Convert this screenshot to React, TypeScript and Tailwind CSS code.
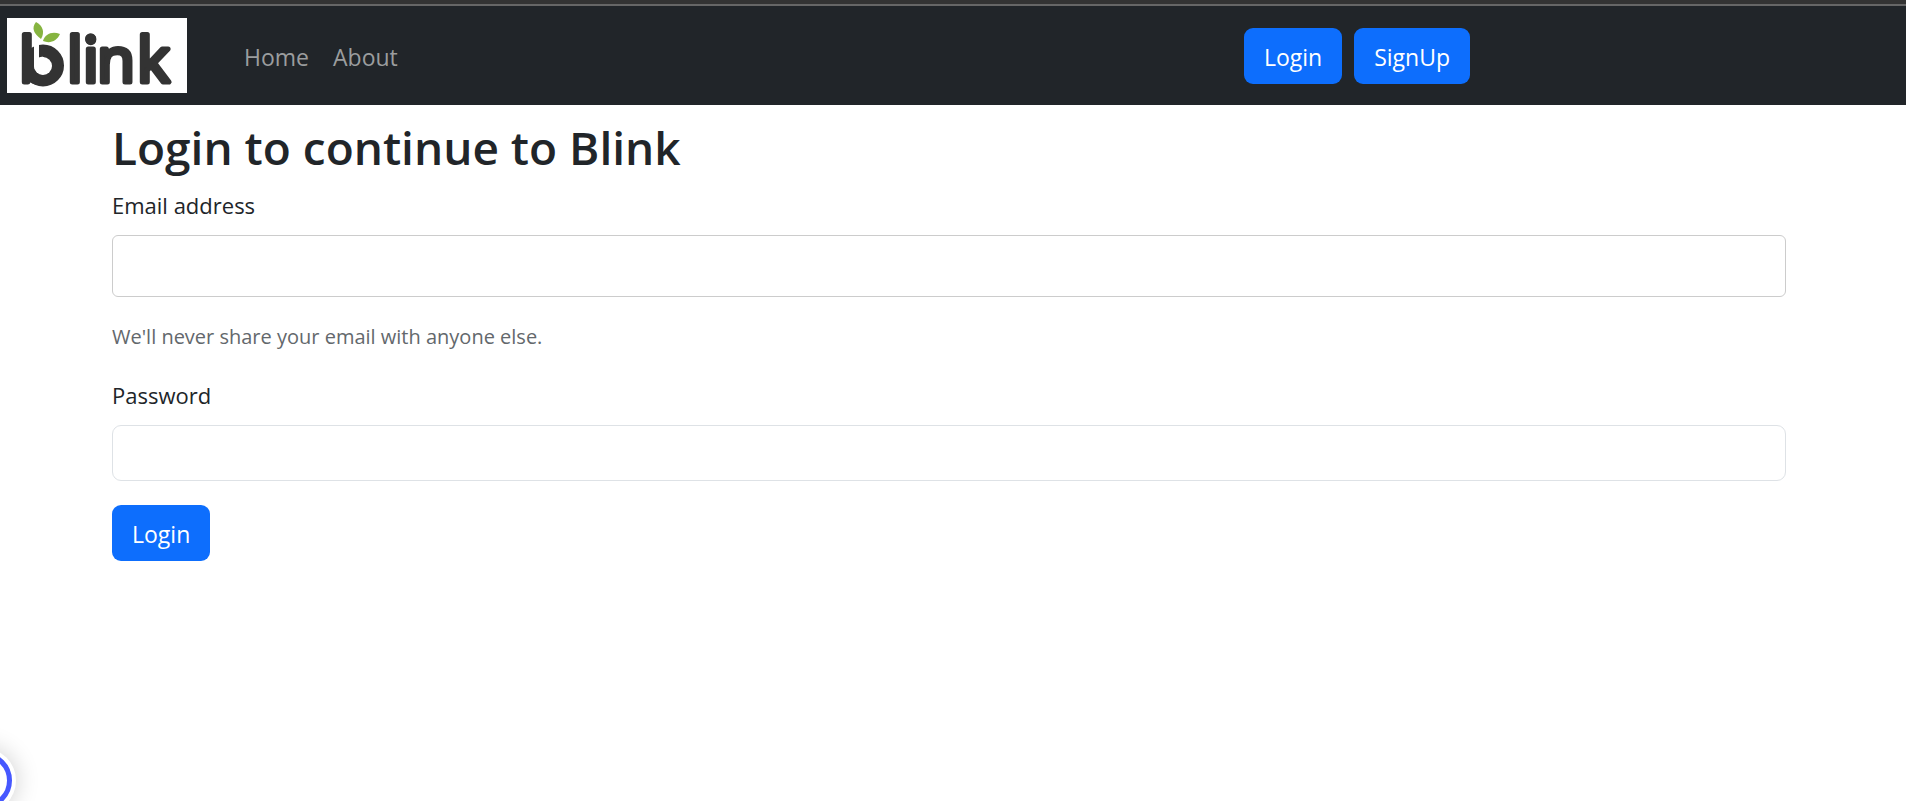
import { useState } from "react";

function BlinkLogo() {
  return (
    <svg viewBox="0 0 180 75" className="h-[75px] w-[180px] overflow-visible bg-white" role="img" aria-label="blink">
      <g
        fill="#333333"
        stroke="#333333"
        strokeWidth="5"
        strokeLinejoin="round"
        fontFamily="'Open Sans', sans-serif"
        fontSize="62"
      >
        <text x="12" y="64">b</text>
        <text x="60" y="64">l</text>
        <text x="76" y="64">i</text>
        <text x="90" y="64">n</text>
        <text x="130" y="64">k</text>
      </g>
      <circle cx="83.500" cy="21" r="5.500" fill="#333333" />
      {/* round bowl of the mark, opened by a slot beside the stem */}
      <circle cx="36" cy="47.500" r="15" fill="none" stroke="#333333" strokeWidth="12" />
      <circle cx="36" cy="48" r="9" fill="#ffffff" />
      <path d="M27 10H32V48H27Z" fill="#ffffff" />
      <path d="M34 21C27 16 24 10 29 4C36 8 38 14 34 21Z" fill="#86b440" />
      <path d="M36 23C38 16 45 13 53 16C50 23 43 26 36 23Z" fill="#86b440" />
    </svg>
  );
}

const button =
  "h-14 cursor-pointer rounded-[9px] bg-[#0d6efd] px-5 pt-0.5 text-[23px] leading-9 text-white hover:bg-[#0b5ed7]";

export default function App() {
  const [email, setEmail] = useState("");
  const [password, setPassword] = useState("");

  return (
    <div className="min-h-screen bg-white font-['Open_Sans','Noto_Sans',sans-serif] text-[#212529]">
      <header className="border-t-4 border-[#333333]">
        <nav className="flex items-center border-t-2 border-[#666666] bg-[#212529] pt-3 pb-3 pl-[7px]">
          <a href="#home" className="shrink-0">
            <BlinkLogo />
          </a>
          <div className="ml-[57px] flex gap-6 pt-0.5 text-[23px] leading-9 text-[#9b9d9e]">
            <a href="#home">Home</a>
            <a href="#about">About</a>
          </div>
          <div className="mr-[436px] ml-auto flex gap-3">
            <button type="button" className={button}>Login</button>
            <button type="button" className={button}>SignUp</button>
          </div>
        </nav>
      </header>

      <main className="pr-2">
        <form className="mx-auto max-w-[1674px] pt-3.5" onSubmit={(e) => e.preventDefault()}>
          <h1 className="text-[46px] leading-14 font-semibold">Login to continue to Blink</h1>
          <label htmlFor="email" className="mt-3 block text-[22px] leading-9">Email address</label>
          <input
            id="email"
            type="email"
            value={email}
            onChange={(e) => setEmail(e.target.value)}
            className="mt-3 block h-[62px] w-full rounded-md border border-[#cccccc] px-4 text-[22px]"
          />
          <p className="mt-6 text-[20px] leading-8 text-[#63686c]">We'll never share your email with anyone else.</p>
          <label htmlFor="password" className="mt-6 block text-[22px] leading-9">Password</label>
          <input
            id="password"
            type="password"
            value={password}
            onChange={(e) => setPassword(e.target.value)}
            className="mt-3 block h-14 w-full rounded-[9px] border border-[#dee2e6] px-4 text-[22px]"
          />
          <button type="submit" className={button + " mt-6"}>Login</button>
        </form>
      </main>

      <button
        type="button"
        aria-label="Open assistant"
        className="fixed -bottom-3 -left-[49px] size-[65px] rounded-full bg-white p-1 shadow-[0_0_24px_rgba(0,0,0,0.2)]"
      >
        <span className="block size-full rounded-full border-[5px] border-[#4658ff]" />
      </button>
    </div>
  );
}
